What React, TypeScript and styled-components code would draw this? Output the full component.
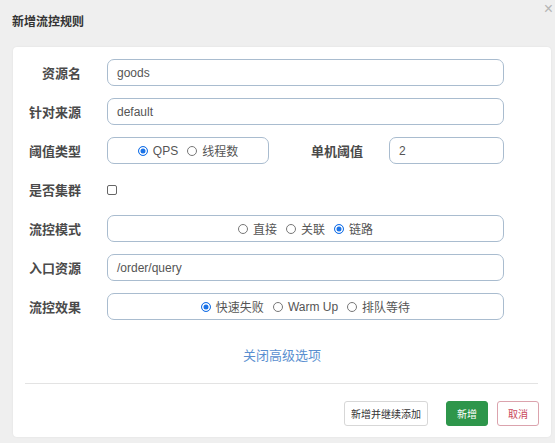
import React from "react";
import styled, {createGlobalStyle} from "styled-components";

const GlobalStyle = createGlobalStyle`
	html, body {
		margin: 0;
		padding: 0;
		background: #efefef;
		font-family: "Liberation Sans", "Noto Sans CJK SC", sans-serif;
	}
`

interface RadioOption {
	label: string;
	checked?: boolean;
}

const Radio = ({label, checked = false}: RadioOption) => (
	<RadioItem>
		<RadioDot checked={checked}/>
		<span>{label}</span>
	</RadioItem>
)

const RadioBox = ({options}: {options: RadioOption[]}) => (
	<Segment>
		{options.map((o) => <Radio key={o.label} {...o}/>)}
	</Segment>
)

export default function App() {
	return (
		<Page>
			<GlobalStyle/>
			<Header>
				<Title>新增流控规则</Title>
				<Close>×</Close>
			</Header>
			<Card>
				<Form>
					<Label>资源名</Label>
					<Input>goods</Input>

					<Label>针对来源</Label>
					<Input>default</Input>

					<Label>阈值类型</Label>
					<SplitRow>
						<RadioBox options={[{label: "QPS", checked: true}, {label: "线程数"}]}/>
						<InlineLabel>单机阈值</InlineLabel>
						<Input>2</Input>
					</SplitRow>

					<Label>是否集群</Label>
					<CheckRow>
						<Check/>
					</CheckRow>

					<Label>流控模式</Label>
					<RadioBox options={[{label: "直接"}, {label: "关联"}, {label: "链路", checked: true}]}/>

					<Label>入口资源</Label>
					<Input>/order/query</Input>

					<Label>流控效果</Label>
					<RadioBox options={[{label: "快速失败", checked: true}, {label: "Warm Up"}, {label: "排队等待"}]}/>
				</Form>
				<LinkRow>
					<Link>关闭高级选项</Link>
				</LinkRow>
				<Divider/>
				<Footer>
					<Button pad={6}>新增并继续添加</Button>
					<Button variant="success">新增</Button>
					<Button variant="danger">取消</Button>
				</Footer>
			</Card>
		</Page>
	)
}

const Page = styled.div`
	width: 555px;
	height: 443px;
	overflow: hidden;
	background: #efefef;
`

const Header = styled.div`
	position: relative;
	height: 47px;
	display: flex;
	align-items: center;
	padding-left: 12px;
	box-sizing: border-box;
`

const Title = styled.div`
	font-size: 12px;
	font-weight: bold;
	color: #333;
	margin-top: -7px;
`

const Close = styled.div`
	position: absolute;
	right: 2px;
	top: 0;
	font-size: 16px;
	line-height: 18px;
	color: #b5b5b5;
`

const Card = styled.div`
	margin-left: 13px;
	width: 538px;
	height: 390px;
	background: #fff;
	border-radius: 4px;
	box-shadow: 0 0 2px rgba(0, 0, 0, 0.08);
	padding-top: 12px;
	box-sizing: border-box;
`

const Form = styled.div`
	display: grid;
	grid-template-columns: 68px 397px;
	column-gap: 26px;
	row-gap: 12px;
	grid-auto-rows: 27px;
`

const Label = styled.div`
	display: flex;
	align-items: center;
	justify-content: flex-end;
	font-size: 13px;
	font-weight: bold;
	color: #4a4a4a;
`

const InlineLabel = styled(Label)`
	padding-right: 26px;
`

const Input = styled.div`
	display: flex;
	align-items: center;
	height: 27px;
	box-sizing: border-box;
	border: 1px solid #a9bccf;
	border-radius: 7px;
	padding-left: 9px;
	font-size: 12px;
	color: #555;
`

const SplitRow = styled.div`
	display: grid;
	grid-template-columns: 162px 1fr 115px;
`

const Segment = styled.div`
	display: flex;
	align-items: center;
	justify-content: center;
	gap: 9px;
	height: 27px;
	box-sizing: border-box;
	border: 1px solid #a9bccf;
	border-radius: 7px;
	font-size: 12px;
	color: #555;
`

const RadioItem = styled.label`
	display: flex;
	align-items: center;
	gap: 5px;
`

const RadioDot = styled.span<{checked: boolean}>`
	width: 10px;
	height: 10px;
	border-radius: 50%;
	box-sizing: border-box;
	border: 1px solid ${({checked}) => checked ? "#1a73e8" : "#777"};
	background: ${({checked}) => checked ? "#1a73e8" : "#fff"};
	box-shadow: ${({checked}) => checked ? "inset 0 0 0 1.5px #fff" : "none"};
`

const CheckRow = styled.div`
	display: flex;
	align-items: center;
`

const Check = styled.span`
	width: 10px;
	height: 10px;
	box-sizing: border-box;
	border: 1px solid #666;
	border-radius: 2px;
	margin-top: 1px;
`

const LinkRow = styled.div`
	display: flex;
	justify-content: center;
	margin-top: 24px;
	height: 20px;
	align-items: center;
`

const Link = styled.span`
	font-size: 13px;
	color: #5a8fd0;
`

const Divider = styled.div`
	margin: 19px 13px 0 12px;
	height: 1px;
	background: #e3e3e3;
`

const Footer = styled.div`
	display: flex;
	justify-content: flex-end;
	align-items: center;
	gap: 9px;
	margin-top: 17px;
	padding-right: 12px;
`

const Button = styled.div<{variant?: "success" | "danger"; pad?: number}>`
	height: 25px;
	padding: 0 ${({pad = 10}) => pad}px;
	display: flex;
	align-items: center;
	box-sizing: border-box;
	border-radius: 3px;
	font-size: 10px;
	border: 1px solid ${({variant}) => variant === "success" ? "#2e964b" : variant === "danger" ? "#dba3ad" : "#d7d7d7"};
	background: ${({variant}) => variant === "success" ? "#2e964b" : "#fff"};
	color: ${({variant}) => variant === "success" ? "#fff" : variant === "danger" ? "#c9485b" : "#333"};
	&:first-child {
		margin-right: 9px;
	}
`
